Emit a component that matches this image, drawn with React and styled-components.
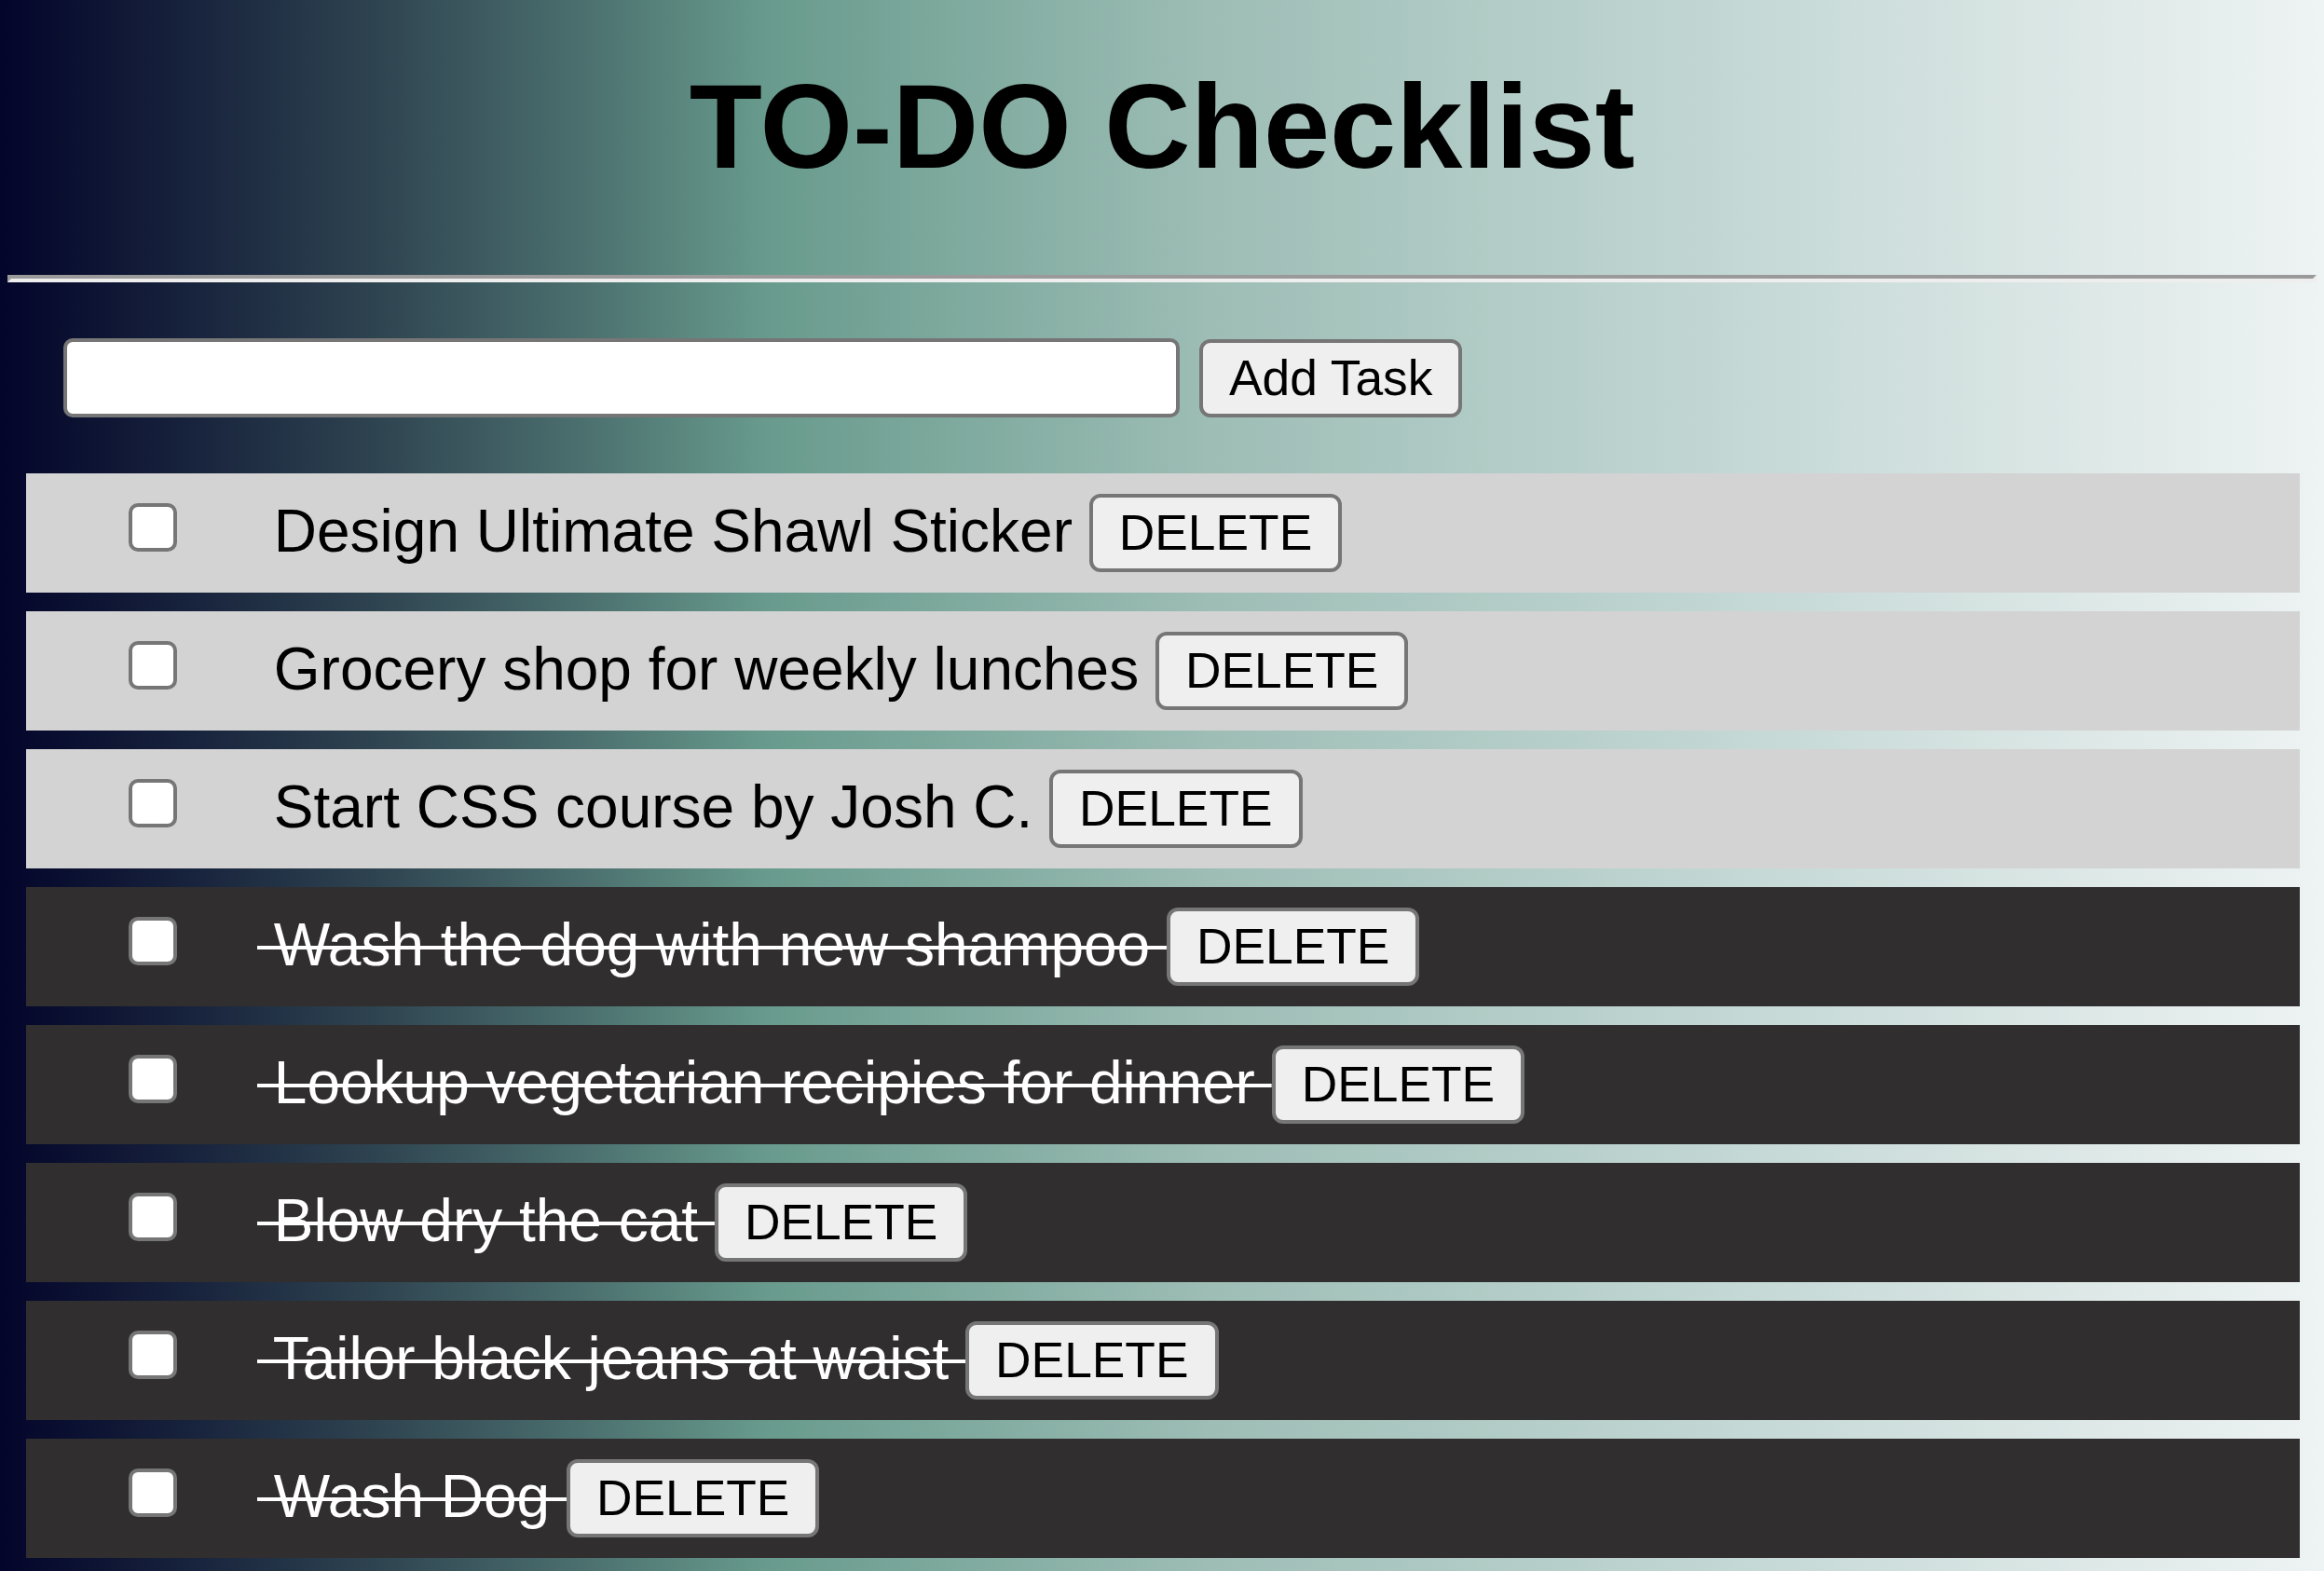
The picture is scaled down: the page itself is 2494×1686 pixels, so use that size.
import { useState } from "react"
import styled, { createGlobalStyle } from "styled-components"

const GlobalStyle = createGlobalStyle`
  html, body {
    margin: 0;
    min-height: 100%;
    background: linear-gradient(
      to right,
      #03052a 0%,
      #17223c 8%,
      #2e4350 16%,
      #4b6f6e 25%,
      #689b8d 33%,
      #9dbdb5 52%,
      #c4d8d5 75%,
      #eef3f3 100%
    );
  }
  body {
    font-family: "Liberation Sans", Arial, sans-serif;
  }
  #root {
    min-height: 100vh;
  }
`

const initialTasks = [
  { id: 1, text: "Design Ultimate Shawl Sticker", done: false },
  { id: 2, text: "Grocery shop for weekly lunches", done: false },
  { id: 3, text: "Start CSS course by Josh C.", done: false },
  { id: 4, text: "Wash the dog with new shampoo", done: true },
  { id: 5, text: "Lookup vegetarian recipies for dinner", done: true },
  { id: 6, text: "Blow dry the cat", done: true },
  { id: 7, text: "Tailor black jeans at waist", done: true },
  { id: 8, text: "Wash Dog", done: true },
]

export default function App() {
  const [tasks, setTasks] = useState(initialTasks)
  const [draft, setDraft] = useState("")

  function addTask(e) {
    e.preventDefault()
    if (!draft.trim()) return
    setTasks([...tasks, { id: Date.now(), text: draft.trim(), done: false }])
    setDraft("")
  }

  function toggle(id) {
    setTasks(tasks.map((t) => (t.id === id ? { ...t, done: !t.done } : t)))
  }

  function remove(id) {
    setTasks(tasks.filter((t) => t.id !== id))
  }

  return (
    <Page>
      <GlobalStyle />
      <Title>TO-DO Checklist</Title>
      <Divider />
      <AddForm onSubmit={addTask}>
        <TaskInput value={draft} onChange={(e) => setDraft(e.target.value)} type="text" />
        <Button type="submit">Add Task</Button>
      </AddForm>
      <TaskList>
        {tasks.map((task) => (
          <TaskRow key={task.id} $done={task.done}>
            <Check type="checkbox" onChange={() => toggle(task.id)} checked={false} />
            <TaskText $done={task.done}>{" " + task.text + " "}</TaskText>
            <Button type="button" onClick={() => remove(task.id)}>DELETE</Button>
          </TaskRow>
        ))}
      </TaskList>
    </Page>
  )
}

const Page = styled.div`
  padding: 0 8px;
  display: flex;
  flex-direction: column;
`

const Title = styled.h1`
  margin: 62px 0 86px;
  text-align: center;
  font-size: 128px;
  font-weight: 700;
  line-height: 147px;
  color: #000;
`

const Divider = styled.hr`
  margin: 0;
  height: 0;
  border-style: solid;
  border-width: 4px;
  border-color: #9a9a9a #eeeeee #eeeeee #9a9a9a;
`

const AddForm = styled.form`
  display: flex;
  align-items: center;
  gap: 21px;
  margin: 60px 0 60px 60px;
`

const TaskInput = styled.input`
  box-sizing: border-box;
  width: 1198px;
  height: 85px;
  padding: 4px 8px;
  border: 4px solid #767676;
  border-radius: 10px;
  background: #fff;
  font-family: "Liberation Sans", Arial, sans-serif;
  font-size: 53.33px;
  outline: none;
`

const Button = styled.button`
  box-sizing: border-box;
  height: 84px;
  padding: 0 28px;
  margin: 0;
  border: 4px solid #767676;
  border-radius: 12px;
  background: #efefef;
  color: #000;
  font-family: "Liberation Sans", Arial, sans-serif;
  font-size: 53.33px;
  line-height: 1;
  cursor: pointer;
  white-space: nowrap;
`

const TaskList = styled.ul`
  list-style: none;
  margin: 0;
  padding: 0 18px 0 20px;
  display: flex;
  flex-direction: column;
  gap: 20px;
`

const TaskRow = styled.li`
  display: flex;
  align-items: center;
  height: 128px;
  background: ${(p) => (p.$done ? "#302e2f" : "#d3d3d3")};
`

const Check = styled.input`
  appearance: none;
  box-sizing: border-box;
  flex: none;
  width: 52px;
  height: 52px;
  margin: 0 86px 12px 110px;
  border: 4px solid #767676;
  border-radius: 10px;
  background: #fff;
  cursor: pointer;
`

const TaskText = styled.span`
  white-space: pre;
  font-size: 64px;
  line-height: 64px;
  margin-bottom: 4px;
  color: ${(p) => (p.$done ? "#fff" : "#000")};
  text-decoration: ${(p) => (p.$done ? "line-through" : "none")};
  text-decoration-thickness: 4px;
`
